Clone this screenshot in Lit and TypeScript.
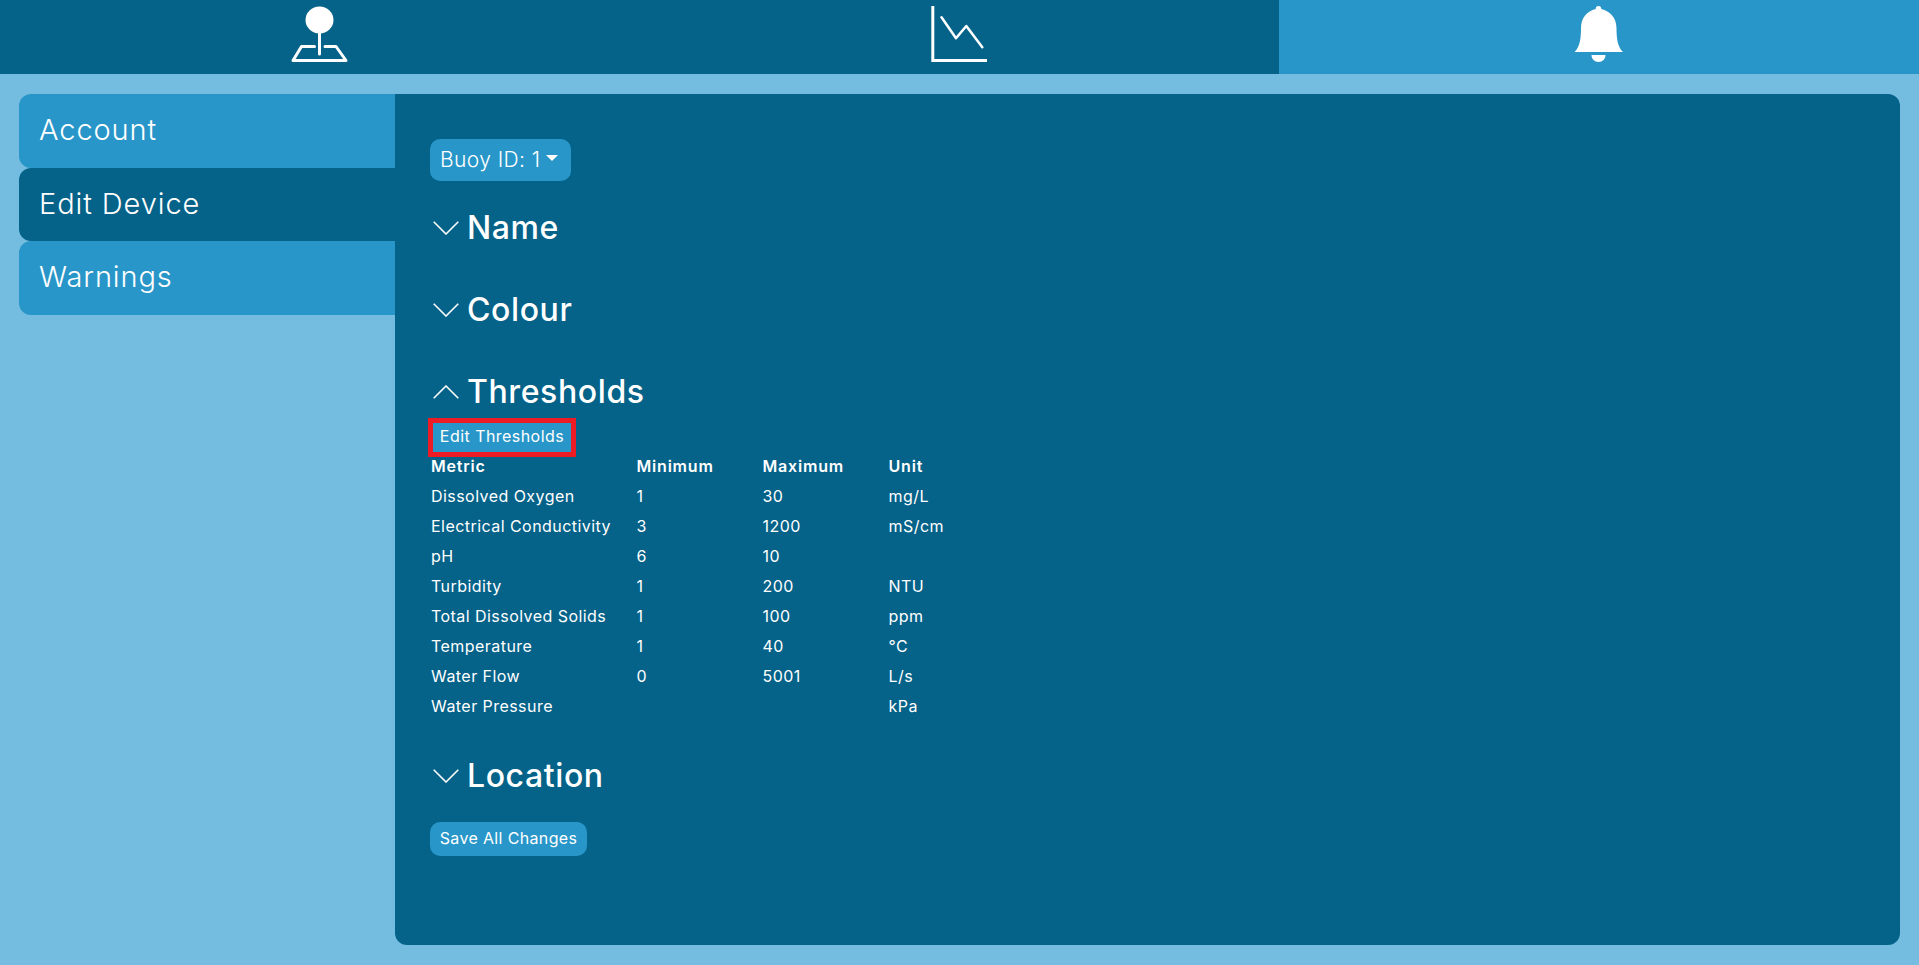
import { LitElement, html, css, svg } from 'lit';
import { customElement } from 'lit/decorators.js';
import { classMap } from 'lit/directives/class-map.js';

const METRICS = [
  ['Dissolved Oxygen', '1', '30', 'mg/L'],
  ['Electrical Conductivity', '3', '1200', 'mS/cm'],
  ['pH', '6', '10', ''],
  ['Turbidity', '1', '200', 'NTU'],
  ['Total Dissolved Solids', '1', '100', 'ppm'],
  ['Temperature', '1', '40', '°C'],
  ['Water Flow', '0', '5001', 'L/s'],
  ['Water Pressure', '', '', 'kPa'],
];

const joystick = svg`
  <ellipse cx="29.5" cy="20" rx="14" ry="13.5" fill="#fff"></ellipse>
  <path d="M29.5 30V54M24.5 46.5H11.5L3 60.5H56L46 46.5H35" fill="none" stroke="#fff" stroke-width="3" stroke-linecap="round" stroke-linejoin="round"></path>`;

const chart = svg`
  <path d="M3.8 6V60.5H58" fill="none" stroke="#fff" stroke-width="3"></path>
  <path d="M12.5 17.3L27 38.3L37.3 26L53.3 47.3" fill="none" stroke="#fff" stroke-width="2.5" stroke-linecap="round" stroke-linejoin="round"></path>`;

const bell = svg`
  <path d="M29.5 6C27.7 6 26.7 7.3 26.7 9C18 11 12 18 12 28C12 38 11 47 5.5 52H54C48.5 47 47.5 38 47.5 28C47.5 18 41 11 32.3 9C32.3 7.3 31.3 6 29.5 6Z" fill="#fff"></path>
  <path d="M22.5 55H36.5C36.5 59 33.5 62 29.5 62C25.5 62 22.5 59 22.5 55Z" fill="#fff"></path>`;

@customElement('app-root')
export class AppRoot extends LitElement {
  static styles = css`
    :host {
      display: block;
      height: 965px;
      background: #74bde0;
      color: #fff;
      font-family: Inter, "Open Sans", sans-serif;
      --dark: #056289;
      --mid: #2896c8;
    }

    .topbar {
      display: grid;
      grid-template-columns: repeat(3, 1fr);
      height: 74px;
      background: var(--dark);
    }

    .topbar div {
      display: flex;
      justify-content: center;
    }

    .topbar .active {
      background: var(--mid);
    }

    .topbar svg {
      display: block;
      width: 60px;
      height: 74px;
    }

    .page {
      display: flex;
      padding: 20px 19px;
      height: 851px;
    }

    .sidebar {
      width: 376px;
      flex: none;
    }

    .side-item {
      display: flex;
      align-items: center;
      height: 73.6px;
      padding: 0 0 2px 20px;
      box-sizing: border-box;
      background: var(--mid);
      border-radius: 12px 0 0 12px;
      font-size: 29px;
      font-weight: 300;
      letter-spacing: 0.9px;
    }

    .side-item.active {
      background: var(--dark);
    }

    .panel {
      flex: 1;
      padding: 45px 35px 0;
      background: var(--dark);
      border-radius: 0 12px 12px 12px;
    }

    .btn {
      display: block;
      border: 0;
      padding: 0 10px;
      color: #fff;
      background: var(--mid);
      border-radius: 10px;
      font-family: inherit;
      font-size: 16px;
      letter-spacing: 0.35px;
    }

    .buoy {
      display: flex;
      align-items: center;
      width: 141px;
      height: 42px;
      padding-bottom: 2px;
      font-size: 21px;
      font-weight: 300;
      letter-spacing: 0.4px;
    }

    .caret {
      width: 0;
      height: 0;
      margin-left: 6px;
      margin-top: -2px;
      border-left: 6.5px solid transparent;
      border-right: 6.5px solid transparent;
      border-top: 6.5px solid #fff;
    }

    .section {
      display: flex;
      align-items: center;
      gap: 8px;
      height: 38px;
      padding-left: 3px;
      margin-top: 44px;
      font-size: 32px;
      font-weight: 500;
      letter-spacing: 0.6px;
    }

    .section span {
      margin-top: -1px;
    }

    .section.first {
      margin-top: 28px;
    }

    .section svg {
      width: 26px;
      height: 14px;
      flex: none;
    }

    .edit {
      width: 138px;
      height: 29px;
      margin: 12px 0 0 3px;
      padding: 0 0 3px;
      border-radius: 0;
      outline: 5px solid #ed1c24;
      letter-spacing: 0.45px;
    }

    .metrics {
      display: grid;
      grid-template-columns: 205.5px 126px 126px 1fr;
      grid-auto-rows: 30px;
      align-items: center;
      margin-left: 1px;
      font-size: 16px;
      letter-spacing: 0.45px;
    }

    .metrics span {
      padding-bottom: 3px;
    }

    .metrics b {
      padding-bottom: 2px;
      font-weight: 600;
      letter-spacing: 0.8px;
    }

    .location {
      margin-top: 35px;
    }

    .save {
      height: 34px;
      width: 157px;
      margin-top: 27px;
      text-align: center;
      padding: 0 0 2px;
    }
  `;

  chevron(open: boolean) {
    return html`<svg viewBox="0 0 26 14">
      <path d=${open ? 'M.7 13.3L13 1L25.3 13.3' : 'M.7 .7L13 13L25.3 .7'} fill="none" stroke="#fff" stroke-width="1.6"></path>
    </svg>`;
  }

  render() {
    const tabs = [joystick, chart, bell];
    return html`
      <div class="topbar">
        ${tabs.map((icon, i) => html`
          <div class=${classMap({ active: i === 2 })}><svg viewBox="0 0 60 74">${icon}</svg></div>
        `)}
      </div>
      <div class="page">
        <nav class="sidebar">
          ${['Account', 'Edit Device', 'Warnings'].map(name => html`
            <div class=${classMap({ 'side-item': true, active: name === 'Edit Device' })}>${name}</div>
          `)}
        </nav>
        <main class="panel">
          <button class="btn buoy">Buoy ID: 1<span class="caret"></span></button>
          <div class="section first">${this.chevron(false)}<span>Name</span></div>
          <div class="section">${this.chevron(false)}<span>Colour</span></div>
          <div class="section">${this.chevron(true)}<span>Thresholds</span></div>
          <button class="btn edit">Edit Thresholds</button>
          <div class="metrics">
            <b>Metric</b><b>Minimum</b><b>Maximum</b><b>Unit</b>
            ${METRICS.map(row => row.map(cell => html`<span>${cell}</span>`))}
          </div>
          <div class="section location">${this.chevron(false)}<span>Location</span></div>
          <button class="btn save">Save All Changes</button>
        </main>
      </div>
    `;
  }
}
